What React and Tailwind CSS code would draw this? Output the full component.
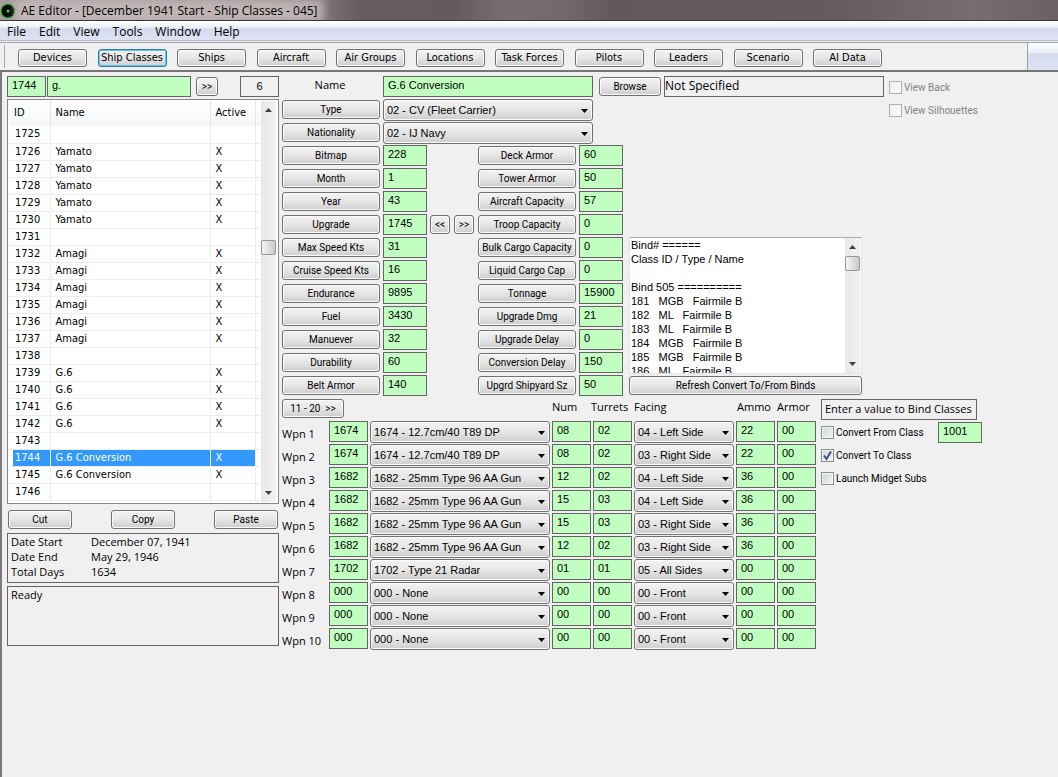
import React, { useState } from "react";

const BTN =
  "border rounded-[3px] bg-linear-to-b from-[#f3f3f3] via-[#e6e6e6] to-[#cdcdcd] text-black whitespace-nowrap overflow-hidden";
const BTN_EDGE = "border-[#707070] shadow-[inset_0_0_0_1px_#fbfbfb]";
const FIELD =
  "border border-[#646464] bg-[#c0ffc0] font-['Liberation_Sans',sans-serif] text-[11px] leading-4 h-[21px] pl-1 pb-[3px] rounded-none outline-none";
const BOX = "border border-[#646464]";

const menus = ["File", "Edit", "View", "Tools", "Window", "Help"];

const tabs = [
  "Devices", "Ship Classes", "Ships", "Aircraft", "Air Groups", "Locations",
  "Task Forces", "Pilots", "Leaders", "Scenario", "AI Data",
];

const classes = [
  { id: 1725, name: "" },
  { id: 1726, name: "Yamato" },
  { id: 1727, name: "Yamato" },
  { id: 1728, name: "Yamato" },
  { id: 1729, name: "Yamato" },
  { id: 1730, name: "Yamato" },
  { id: 1731, name: "" },
  { id: 1732, name: "Amagi" },
  { id: 1733, name: "Amagi" },
  { id: 1734, name: "Amagi" },
  { id: 1735, name: "Amagi" },
  { id: 1736, name: "Amagi" },
  { id: 1737, name: "Amagi" },
  { id: 1738, name: "" },
  { id: 1739, name: "G.6" },
  { id: 1740, name: "G.6" },
  { id: 1741, name: "G.6" },
  { id: 1742, name: "G.6" },
  { id: 1743, name: "" },
  { id: 1744, name: "G.6 Conversion" },
  { id: 1745, name: "G.6 Conversion" },
  { id: 1746, name: "" },
];

const stats = [
  ["Bitmap", "228", "Deck Armor", "60"],
  ["Month", "1", "Tower Armor", "50"],
  ["Year", "43", "Aircraft Capacity", "57"],
  ["Upgrade", "1745", "Troop Capacity", "0"],
  ["Max Speed Kts", "31", "Bulk Cargo Capacity", "0"],
  ["Cruise Speed Kts", "16", "Liquid Cargo Cap", "0"],
  ["Endurance", "9895", "Tonnage", "15900"],
  ["Fuel", "3430", "Upgrade Dmg", "21"],
  ["Manuever", "32", "Upgrade Delay", "0"],
  ["Durability", "60", "Conversion Delay", "150"],
  ["Belt Armor", "140", "Upgrd Shipyard Sz", "50"],
];

const weapons = [
  ["1674", "1674 - 12.7cm/40 T89 DP", "08", "02", "04 - Left Side", "22", "00"],
  ["1674", "1674 - 12.7cm/40 T89 DP", "08", "02", "03 - Right Side", "22", "00"],
  ["1682", "1682 - 25mm Type 96 AA Gun", "12", "02", "04 - Left Side", "36", "00"],
  ["1682", "1682 - 25mm Type 96 AA Gun", "15", "03", "04 - Left Side", "36", "00"],
  ["1682", "1682 - 25mm Type 96 AA Gun", "15", "03", "03 - Right Side", "36", "00"],
  ["1682", "1682 - 25mm Type 96 AA Gun", "12", "02", "03 - Right Side", "36", "00"],
  ["1702", "1702 - Type 21 Radar", "01", "01", "05 - All Sides", "00", "00"],
  ["000", "000 - None", "00", "00", "00 - Front", "00", "00"],
  ["000", "000 - None", "00", "00", "00 - Front", "00", "00"],
  ["000", "000 - None", "00", "00", "00 - Front", "00", "00"],
];

const binds = `Bind# ======
Class ID / Type / Name

Bind 505 ==========
181   MGB   Fairmile B
182   ML   Fairmile B
183   ML   Fairmile B
184   MGB   Fairmile B
185   MGB   Fairmile B
186   ML   Fairmile B`;

const Button = ({ className = "", children, ...rest }) => (
  <button
    type="button"
    className={`${BTN} ${BTN_EDGE} h-[19px] text-[10px] leading-4 font-['Roboto',sans-serif] ${className}`}
    {...rest}
  >
    {children}
  </button>
);

const Field = ({ label, value, className = "" }) => (
  <input type="text" aria-label={label} defaultValue={value} className={`${FIELD} ${className}`} />
);

const Select = ({ label, value, className = "" }) => (
  <div className={`relative ${className}`}>
    <select
      aria-label={label}
      defaultValue={value}
      className={`${BTN} ${BTN_EDGE} appearance-none block w-full h-[22px] pl-[3px] font-['Liberation_Sans',sans-serif] text-[11px] leading-4`}
    >
      <option>{value}</option>
    </select>
    <svg className="absolute right-[5px] top-[10px] pointer-events-none" width="7" height="4" viewBox="0 0 7 4">
      <path d="M0 0h7L3.5 4z" fill="#000" />
    </svg>
  </div>
);

const Check = ({ label, checked = false, disabled = false }) => {
  const [on, setOn] = useState(checked);
  return (
    <label
      className={`flex items-center gap-[2px] h-[23px] text-[10px] font-['Roboto',sans-serif] whitespace-nowrap ${
        disabled ? "text-[#838383]" : "text-black"
      }`}
    >
      <span className="relative block size-[13px]">
        <input
          type="checkbox"
          checked={on}
          disabled={disabled}
          onChange={(e) => setOn(e.target.checked)}
          className={`appearance-none block size-[13px] border bg-linear-to-br shadow-[inset_0_0_0_1px_#f4f4f4] ${
            disabled ? "border-[#b1b1b1] from-[#f0f0f0] to-[#fafafa]" : "border-[#8e8f8f] from-[#cfd3d8] to-[#f6f6f6]"
          }`}
        />
        {on && (
          <svg className="absolute left-0 top-0 pointer-events-none" width="13" height="13" viewBox="0 0 13 13">
            <path d="M3 6.5l2.5 3.5L10 2.5" fill="none" stroke="#3d5291" strokeWidth="2" />
          </svg>
        )}
      </span>
      {label}
    </label>
  );
};

const Arrow = ({ up = false }) => (
  <svg className="mx-auto" width="7" height="4" viewBox="0 0 7 4">
    <path d={up ? "M0 4h7L3.5 0z" : "M0 0h7L3.5 4z"} fill="#404040" />
  </svg>
);

const Scrollbar = ({ thumb }) => (
  <div className="w-[15px] shrink-0 bg-linear-to-r from-[#e8e8e8] to-[#f2f2f2] flex flex-col py-[7px]">
    <Arrow up />
    <div className={`w-full h-[15px] border border-[#979797] rounded-[2px] bg-linear-to-r from-[#f5f5f5] to-[#c9c9cc] ${thumb}`} />
    <div className="mt-auto">
      <Arrow />
    </div>
  </div>
);

const ClassList = () => {
  const [selected, setSelected] = useState(1744);

  return (
    <div className="mt-[2px] h-[405px] border border-[#828790] bg-white p-px pr-[2px] flex font-['DejaVu_Sans_Condensed','DejaVu_Sans',sans-serif] text-[11px]">
      <table className="flex-1 table-fixed border-collapse self-start">
        <colgroup>
          <col className="w-[4px]" />
          <col className="w-[37px]" />
          <col className="w-[160px]" />
          <col className="w-[45px]" />
          <col />
        </colgroup>
        <thead>
          <tr className="h-[25px] bg-linear-to-b from-white to-[#f5f6f7]">
            <th />
            <th className="font-normal text-left pl-px border-r border-[#e3e4e6]">ID</th>
            <th className="font-normal text-left pl-[5px] border-r border-[#e3e4e6]">Name</th>
            <th className="font-normal text-left pl-[5px] border-r border-[#e3e4e6]">Active</th>
            <th />
          </tr>
        </thead>
        <tbody>
          {classes.map((c) => {
            const on = c.id === selected;
            const cell = `p-0 border-r border-b border-[#ededed] leading-4 ${on ? "bg-[#3399ff] text-white" : ""}`;
            return (
              <tr key={c.id} className="h-[17px]" onClick={() => setSelected(c.id)}>
                <td className="p-0 border-b border-[#ededed]" />
                <td className={`${cell} pl-[2px]`}>{c.id}</td>
                <td className={`${cell} pl-[5px]`}>{c.name}</td>
                <td className={`${cell} pl-[5px]`}>{c.name ? "X" : ""}</td>
                <td className="p-0 border-b border-[#ededed]" />
              </tr>
            );
          })}
        </tbody>
      </table>
      <Scrollbar thumb="mt-[128px]" />
    </div>
  );
};

const Sidebar = () => (
  <aside className="w-[272px] shrink-0">
    <div className="flex items-center">
      <Field label="Class ID" value="1744" className="w-[39px]" />
      <Field label="Search" value="g." className="w-[144px] ml-px" />
      <Button className="w-[22px] ml-[5px]">&gt;&gt;</Button>
      <output className={`${BOX} ml-auto w-[39px] h-[21px] text-center text-[11px] leading-[18px] font-['Liberation_Sans',sans-serif]`}>
        6
      </output>
    </div>
    <ClassList />
    <div className="flex justify-between px-px mt-[6px]">
      <Button className="w-[64px]">Cut</Button>
      <Button className="w-[64px]">Copy</Button>
      <Button className="w-[64px]">Paste</Button>
    </div>
    <dl className={`${BOX} mt-1 h-[50px] px-[3px] grid grid-cols-[80px_1fr] auto-rows-[15px] text-[11px] leading-[15px]`}>
      <dt>Date Start</dt>
      <dd>December 07, 1941</dd>
      <dt>Date End</dt>
      <dd>May 29, 1946</dd>
      <dt>Total Days</dt>
      <dd>1634</dd>
    </dl>
    <div className={`${BOX} mt-[3px] h-[60px] px-[3px] text-[11px] leading-4`}>Ready</div>
  </aside>
);

const StatRow = ({ row }) => {
  const [left, leftValue, right, rightValue] = row;
  return (
    <div className="flex h-[23px] items-start">
      <Button className="w-[98px] mt-px">{left}</Button>
      <Field label={left} value={leftValue} className="w-[44px] ml-[3px]" />
      <div className="w-[51px] px-[3px] pt-px flex gap-1">
        {left === "Upgrade" && (
          <>
            <Button className="w-[20px]">&lt;&lt;</Button>
            <Button className="w-[20px]">&gt;&gt;</Button>
          </>
        )}
      </div>
      <Button className="w-[98px] mt-px">{right}</Button>
      <Field label={right} value={rightValue} className="w-[44px] ml-[3px]" />
    </div>
  );
};

const Details = () => (
  <div className="flex gap-[5px]">
    <div>
      <div className="flex h-[23px] items-start">
        <label htmlFor="ship-name" className="w-[101px] pr-[5px] text-center text-[11px] leading-[17px]">
          Name
        </label>
        <input id="ship-name" type="text" defaultValue="G.6 Conversion" className={`${FIELD} w-[210px]`} />
        <Button className="w-[62px] ml-[6px] mt-px">Browse</Button>
        <div className={`${BOX} w-[220px] ml-[3px] h-[21px] text-[12px] leading-[17px]`}>Not Specified</div>
      </div>
      <div className="flex gap-[3px] h-[23px] items-start">
        <Button className="w-[98px] mt-px">Type</Button>
        <Select label="Type" value="02 - CV (Fleet Carrier)" className="w-[210px]" />
      </div>
      <div className="flex gap-[3px] h-[23px] items-start">
        <Button className="w-[98px] mt-px">Nationality</Button>
        <Select label="Nationality" value="02 - IJ Navy" className="w-[210px]" />
      </div>
      <div className="flex gap-[6px]">
        <div>
          {stats.map((row) => (
            <StatRow key={row[0]} row={row} />
          ))}
        </div>
        <div className="w-[233px] flex flex-col justify-end pb-[3px]">
          <div className="flex h-[137px] border border-[#e2e3ea] border-t-[#abadb3] bg-white pr-px">
            <textarea
              readOnly
              aria-label="Binds"
              value={binds}
              className="flex-1 min-w-0 resize-none overflow-hidden whitespace-pre outline-none pl-px font-['Liberation_Sans',sans-serif] text-[11px] leading-[14px]"
            />
            <Scrollbar thumb="mt-[7px]" />
          </div>
          <Button className="w-full mt-[2px]">Refresh Convert To/From Binds</Button>
        </div>
      </div>
    </div>
    <div>
      <Check label="View Back" disabled />
      <Check label="View Silhouettes" disabled />
    </div>
  </div>
);

const Weapons = () => (
  <div>
    <div className="flex h-[23px] items-start text-[11px] leading-[18px]">
      <Button className="w-[62px] mt-px whitespace-pre">{"11 - 20  >>"}</Button>
      <span className="ml-[208px] w-[39px]">Num</span>
      <span className="w-[43px]">Turrets</span>
      <span className="w-[103px]">Facing</span>
      <span className="w-[40px]">Ammo</span>
      <span>Armor</span>
    </div>
    {weapons.map(([id, device, num, turrets, facing, ammo, armor], i) => (
      <div key={i} className="flex h-[23px] items-start gap-[2px]">
        <span className="w-[45px] pt-1 text-[11px] leading-[17px] whitespace-nowrap">Wpn {i + 1}</span>
        <Field label={`Weapon ${i + 1} ID`} value={id} className="w-[39px]" />
        <Select label={`Weapon ${i + 1}`} value={device} className="w-[180px]" />
        <Field label={`Weapon ${i + 1} num`} value={num} className="w-[39px]" />
        <Field label={`Weapon ${i + 1} turrets`} value={turrets} className="w-[39px]" />
        <Select label={`Weapon ${i + 1} facing`} value={facing} className="w-[100px]" />
        <Field label={`Weapon ${i + 1} ammo`} value={ammo} className="w-[39px]" />
        <Field label={`Weapon ${i + 1} armor`} value={armor} className="w-[39px]" />
      </div>
    ))}
  </div>
);

const Binding = () => (
  <div className="pt-px">
    <div className={`${BOX} w-[156px] h-[21px] px-[3px] text-[11px] leading-[17px] whitespace-nowrap`}>
      Enter a value to Bind Classes
    </div>
    <div className="flex mt-px">
      <div className="w-[117px]">
        <Check label="Convert From Class" />
        <Check label="Convert To Class" checked />
        <Check label="Launch Midget Subs" />
      </div>
      <Field label="Bind value" value="1001" className="w-[44px] mt-px" />
    </div>
  </div>
);

const App = () => {
  const [tab, setTab] = useState("Ship Classes");

  return (
    <div className="min-h-screen flex flex-col bg-[#f0f0f0] text-black font-['Open_Sans','Noto_Sans',sans-serif]">
      <header className="h-[21px] flex items-center gap-[5px] pt-[2px] text-[12px] bg-[linear-gradient(90deg,#a89b9d_0%,#958789_28%,#675b5f_34%,#665a5e_43%,#766b6f_47%,#74696d_53%,#63575b_58%,#665a5e_78%,#776c70_92%,#6c6064_100%)] border-b border-[#3c3638] overflow-hidden">
        <svg width="16" height="16" viewBox="0 0 16 16">
          <circle cx="8" cy="8" r="7" fill="#000" stroke="#2fc535" strokeWidth="1.5" strokeDasharray="2 1" />
          <circle cx="8" cy="8" r="1.5" fill="#35e03c" />
        </svg>
        <h1 className="bg-[#cfc4c5]/70 shadow-[0_0_8px_6px_#cfc4c5b3] leading-3">
          AE Editor - [December 1941 Start - Ship Classes - 045]
        </h1>
      </header>
      <nav className="h-[20px] flex items-center gap-[13px] pl-[7px] pt-[2px] text-[12px] leading-4 bg-[linear-gradient(180deg,#ffffff_0%,#eaeef7_35%,#d5dbed_40%,#dde3f3_100%)] border-b border-[#b4b8c8]">
        {menus.map((m) => (
          <button key={m} type="button">
            {m}
          </button>
        ))}
      </nav>
      <div className="h-[30px] border-t border-b-2 border-t-[#a0a0a0] border-b-[#777477] mt-px flex items-stretch">
        <div className="w-[5px] my-[2px] border-r border-[#a8a8a8]" />
        <div className="w-[864px] ml-[13px] pt-[2px] flex justify-between items-center">
          {tabs.map((t) => (
            <button
              key={t}
              type="button"
              onClick={() => setTab(t)}
              className={`${BTN} w-[69px] h-[18px] text-[11px] leading-4 font-['DejaVu_Sans_Condensed','DejaVu_Sans',sans-serif] ${
                t === tab ? "border-[#2c7fa8] shadow-[inset_0_0_0_1px_#5cc8f2]" : BTN_EDGE
              }`}
            >
              {t}
            </button>
          ))}
        </div>
        <div className="ml-auto w-[31px] border-l border-[#a0a0a0] bg-[linear-gradient(180deg,#ffffff_0%,#eaeef7_35%,#d5dbed_40%,#dde3f3_100%)]" />
      </div>
      <main className="flex-1 flex gap-[3px] items-start border-l-2 border-[#7c7a7c] pl-[5px] pt-1">
        <Sidebar />
        <section className="flex-1">
          <Details />
          <div className="flex gap-[5px]">
            <Weapons />
            <Binding />
          </div>
        </section>
      </main>
    </div>
  );
};

export default App;
